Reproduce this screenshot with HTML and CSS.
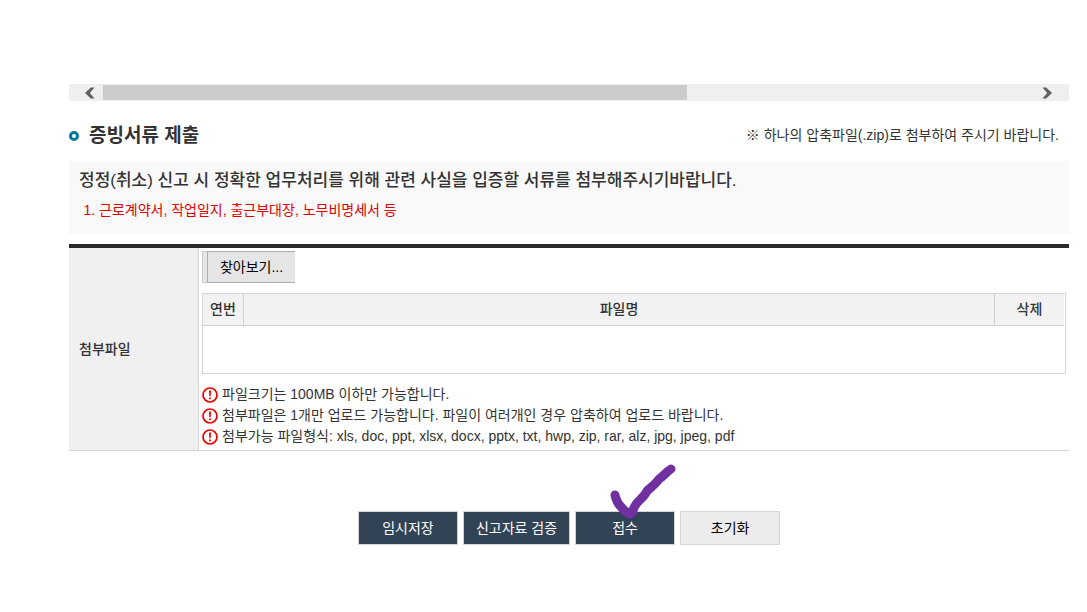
FILE: index.html
```html
<!DOCTYPE html>
<html lang="ko">
<head>
<meta charset="utf-8">
<meta name="viewport" content="width=device-width, initial-scale=1">
<title>증빙서류 제출</title>
<link rel="stylesheet" href="styles.css">
</head>
<body>
<main class="page">
  <div class="scroller">
    <button class="scroll-btn scroll-prev" type="button" aria-label="왼쪽으로"><svg width="10" height="12" viewBox="0 0 10 12"><path d="M5.8 0.5H9.5L4.8 6L9.5 11.5H5.8L0 6Z" fill="#606060"/></svg></button>
    <div class="scroll-track"><div class="scroll-thumb"></div></div>
    <button class="scroll-btn scroll-next" type="button" aria-label="오른쪽으로"><svg width="10" height="12" viewBox="0 0 10 12"><path d="M4.2 0.5H0.5L5.2 6L0.5 11.5H4.2L10 6Z" fill="#606060"/></svg></button>
  </div>

  <header class="section-head">
    <h2 class="section-title"><span class="bullet"></span>증빙서류 제출</h2>
    <p class="section-note">※ 하나의 압축파일(.zip)로 첨부하여 주시기 바랍니다.</p>
  </header>

  <section class="guide">
    <h3 class="guide-title">정정(취소) 신고 시 정확한 업무처리를 위해 관련 사실을 입증할 서류를 첨부해주시기바랍니다.</h3>
    <ol class="guide-list"><li>근로계약서, 작업일지, 출근부대장, 노무비명세서 등</li></ol>
  </section>

  <section class="attach">
    <div class="attach-label">첨부파일</div>
    <div class="attach-body">
      <div class="picker">
        <input class="picker-input" type="file" id="file">
        <label class="picker-btn" for="file">찾아보기...</label>
      </div>
      <div class="file-box">
        <table class="files">
          <thead><tr><th class="col-no">연번</th><th>파일명</th><th class="col-del">삭제</th></tr></thead>
        </table>
      </div>
      <ul class="notes">
        <li><svg class="warn" width="16" height="16" viewBox="0 0 16 16"><circle cx="8" cy="8" r="7" fill="none" stroke="#f00000" stroke-width="1.7"/><path d="M7 3.5H9L8.7 9.3H7.3ZM7.1 10.5H8.9V12.2H7.1Z" fill="#f00000"/></svg>파일크기는 100MB 이하만 가능합니다.</li>
        <li><svg class="warn" width="16" height="16" viewBox="0 0 16 16"><circle cx="8" cy="8" r="7" fill="none" stroke="#f00000" stroke-width="1.7"/><path d="M7 3.5H9L8.7 9.3H7.3ZM7.1 10.5H8.9V12.2H7.1Z" fill="#f00000"/></svg>첨부파일은 1개만 업로드 가능합니다. 파일이 여러개인 경우 압축하여 업로드 바랍니다.</li>
        <li><svg class="warn" width="16" height="16" viewBox="0 0 16 16"><circle cx="8" cy="8" r="7" fill="none" stroke="#f00000" stroke-width="1.7"/><path d="M7 3.5H9L8.7 9.3H7.3ZM7.1 10.5H8.9V12.2H7.1Z" fill="#f00000"/></svg>첨부가능 파일형식: xls, doc, ppt, xlsx, docx, pptx, txt, hwp, zip, rar, alz, jpg, jpeg, pdf</li>
      </ul>
    </div>
  </section>

  <div class="actions">
    <button class="btn" type="button">임시저장</button>
    <button class="btn" type="button">신고자료 검증</button>
    <div class="marked">
      <button class="btn" type="button">접수</button>
      <svg class="check" width="66" height="56" viewBox="0 0 66 56"><path d="M5 31C6 36 9 41 12 44C15 47 17 49 20 50C24 49 22 46 25 42C28 36 34 34 37 27C41 23 46 20 49 15C54 12 56 8 61 5" fill="none" stroke="#7030a0" stroke-width="9" stroke-linecap="round" stroke-linejoin="round"/></svg>
    </div>
    <button class="btn btn-light" type="reset">초기화</button>
  </div>
</main>
</body>
</html>
```
FILE: styles.css
```css
* { box-sizing: border-box; }
body {
  margin: 0;
  background: #fff;
  color: #333;
  font: 14px/21px "Liberation Sans", "Noto Sans CJK KR", sans-serif;
}
h2, h3, p, ul, ol { margin: 0; padding: 0; }
ul, ol { list-style: none; }
button { font: inherit; }

.page { padding: 84px 18px 24px 69px; }

.scroller {
  display: flex;
  height: 17px;
  background: #efefef;
}
.scroll-btn {
  display: flex;
  align-items: center;
  width: 34px;
  padding: 0;
  border: 0;
  background: none;
}
.scroll-prev { padding-left: 16px; }
.scroll-next { padding-left: 7px; }
.scroll-track { flex: 1; padding: 1px 0; }
.scroll-thumb { width: 62.7%; height: 15px; background: #cbcbcb; }

.section-head {
  display: flex;
  justify-content: space-between;
  align-items: center;
  height: 60px;
  padding: 9px 10px 0 0;
}
.section-title {
  display: flex;
  align-items: center;
  gap: 10px;
  font-size: 19px;
  font-weight: 700;
}
.bullet {
  width: 10px;
  height: 10px;
  border: 3px solid #007a99;
  border-radius: 50%;
}

.guide { padding: 8px 10px 13px; background: #f9f9f9; }
.guide-title { font-size: 17px; line-height: 24px; font-weight: 500; }
.guide-list {
  margin-top: 7px;
  padding-left: 20px;
  list-style: decimal;
  color: #e00000;
}

.attach {
  display: flex;
  margin-top: 10px;
  border-top: 4px solid #2b292a;
  border-bottom: 1px solid #d5d5d5;
}
.attach-label {
  display: flex;
  align-items: center;
  width: 130px;
  padding-left: 10px;
  border-right: 1px solid #d5d5d5;
  background: #f0f0f0;
  font-weight: 500;
}
.attach-body { flex: 1; padding: 3px; }

.picker {
  display: flex;
  width: 93px;
  height: 32px;
  padding-left: 4px;
  border: 1px solid #ccc;
  border-right: 0;
  background: #e6e6e6;
}
.picker-input { position: absolute; width: 1px; height: 1px; opacity: 0; }
.picker-btn {
  flex: 1;
  margin: -1px 0;
  border: 1px solid #adadad;
  border-right: 0;
  background: #e5e5e5;
  color: #000;
  line-height: 30px;
  text-align: center;
}

.file-box {
  min-height: 81px;
  margin-top: 10px;
  padding-right: 1px;
  border: 1px solid #d5d5d5;
}
.files { width: 100%; border-collapse: separate; border-spacing: 0; table-layout: fixed; }
.files th {
  height: 32px;
  padding: 0;
  border-bottom: 1px solid #d0d0d0;
  background: #f2f2f2;
  font-weight: 500;
}
.files th + th { border-left: 1px solid #d0d0d0; }
.files .col-no { width: 40px; }
.files .col-del { width: 70px; }

.notes { margin-top: 10px; }
.notes li { display: flex; align-items: center; gap: 4px; }
.warn { flex: none; }

.actions {
  display: flex;
  justify-content: center;
  gap: 5px;
  margin-top: 60px;
}
.btn {
  min-width: 100px;
  height: 34px;
  padding: 0 12px;
  border: 1px solid #d5d5d5;
  background: #334356;
  color: #fff;
}
.btn-light { background: #ececec; color: #000; }
.marked { position: relative; }
.check { position: absolute; left: 35px; top: -47px; pointer-events: none; }
```
